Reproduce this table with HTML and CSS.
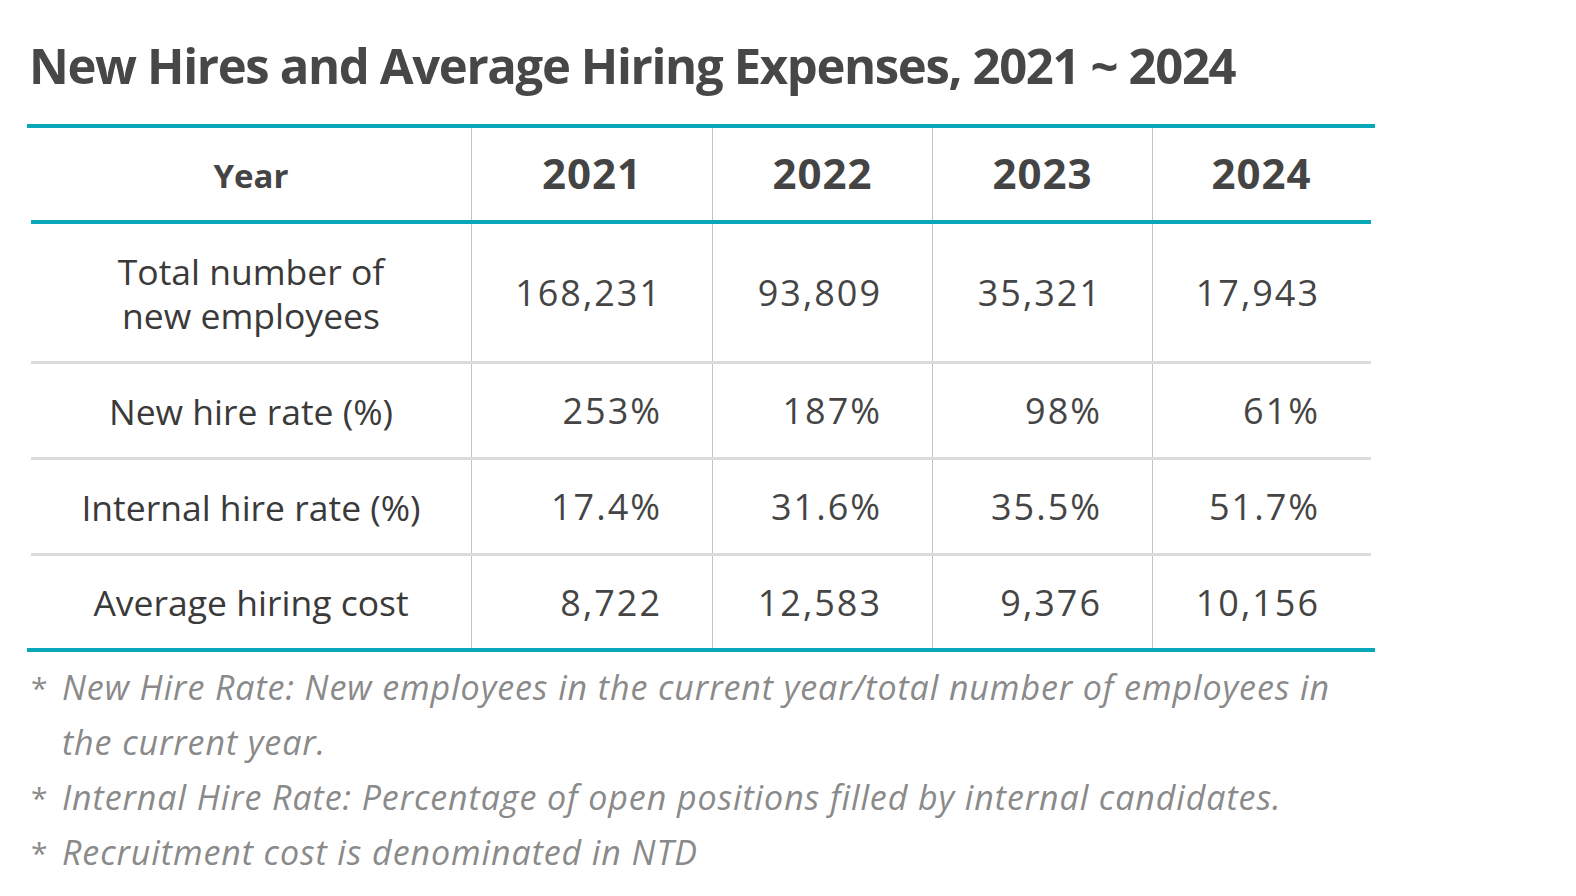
FILE: index.html
```html
<!DOCTYPE html>
<html lang="en">
<head>
<meta charset="utf-8">
<title>New Hires and Average Hiring Expenses</title>
<link rel="stylesheet" href="styles.css">
</head>
<body>
<div class="page">
  <h1 class="title">New Hires and Average Hiring Expenses, 2021 ~ 2024</h1>
  <div class="table">
    <div class="row head">
      <div class="cell label-cell"><span class="head-label">Year</span></div>
      <div class="cell year-cell">2021</div>
      <div class="cell year-cell">2022</div>
      <div class="cell year-cell">2023</div>
      <div class="cell year-cell">2024</div>
    </div>
    <div class="row r-tall">
      <div class="cell label-cell"><span class="label">Total number of<br>new employees</span></div>
      <div class="cell num">168,231</div>
      <div class="cell num">93,809</div>
      <div class="cell num">35,321</div>
      <div class="cell num">17,943</div>
    </div>
    <div class="row r-mid">
      <div class="cell label-cell"><span class="label">New hire rate (%)</span></div>
      <div class="cell num">253%</div>
      <div class="cell num">187%</div>
      <div class="cell num">98%</div>
      <div class="cell num">61%</div>
    </div>
    <div class="row r-mid">
      <div class="cell label-cell"><span class="label">Internal hire rate (%)</span></div>
      <div class="cell num">17.4%</div>
      <div class="cell num">31.6%</div>
      <div class="cell num">35.5%</div>
      <div class="cell num">51.7%</div>
    </div>
    <div class="row r-last">
      <div class="cell label-cell"><span class="label">Average hiring cost</span></div>
      <div class="cell num">8,722</div>
      <div class="cell num">12,583</div>
      <div class="cell num">9,376</div>
      <div class="cell num">10,156</div>
    </div>
  </div>
  <div class="notes">
    <div class="note"><span class="mark">*</span><span class="note-text">New Hire Rate: New employees in the current year/total number of employees in<br>the current year.</span></div>
    <div class="note"><span class="mark">*</span><span class="note-text">Internal Hire Rate: Percentage of open positions filled by internal candidates.</span></div>
    <div class="note"><span class="mark">*</span><span class="note-text">Recruitment cost is denominated in NTD</span></div>
  </div>
</div>
</body>
</html>
```
FILE: styles.css
```css
* { box-sizing: border-box; }
html, body {
  margin: 0;
  padding: 0;
  background: #ffffff;
}
body {
  font-family: "Open Sans", "Noto Sans", "Liberation Sans", sans-serif;
  color: #444444;
  width: 1576px;
  height: 896px;
  overflow: hidden;
}
.page {
  padding-top: 35px;
}
.title {
  margin: 0 0 29px 29px;
  font-family: "Open Sans", "Noto Sans", sans-serif;
  font-weight: 700;
  font-size: 49px;
  letter-spacing: -1.35px;
  line-height: 60px;
  height: 60px;
  color: #474747;
  white-space: nowrap;
}
.table {
  margin-left: 27px;
  width: 1348px;
  border-top: 4px solid #0aa6ba;
  border-bottom: 4px solid #0aa6ba;
}
.row {
  display: grid;
  grid-template-columns: 440px 241px 220px 220px 218px;
  margin: 0 4px;
}
.head {
  height: 96px;
  border-bottom: 4px solid #0aa6ba;
}
.r-tall {
  height: 140px;
  border-bottom: 3px solid #dcdcdc;
}
.r-mid {
  height: 96px;
  border-bottom: 3px solid #dcdcdc;
}
.r-last {
  height: 92px;
}
.cell {
  display: flex;
  align-items: center;
  border-left: 1px solid #c3c3c3;
}
.label-cell {
  border-left: none;
  justify-content: center;
  text-align: center;
}
.head-label {
  font-weight: 700;
  font-size: 33px;
  padding-top: 3px;
  color: #444444;
}
.year-cell {
  justify-content: center;
  font-weight: 700;
  font-size: 42px;
  letter-spacing: 1px;
  padding-bottom: 4px;
  color: #444444;
}
.label {
  font-size: 35.5px;
  font-weight: 500;
  line-height: 44px;
  color: #3a3a3a;
}
.num {
  justify-content: flex-end;
  padding-right: 50px;
  font-size: 36px;
  letter-spacing: 2px;
  color: #454545;
}
.notes {
  margin: 8px 0 0 31px;
  color: #8a8a8a;
  font-size: 34px;
  line-height: 55px;
}
.note {
  display: flex;
  align-items: flex-start;
  white-space: nowrap;
}
.mark {
  width: 31px;
  flex: none;
  font-size: 30px;
  font-style: normal;
}
.note-text {
  font-style: italic;
  letter-spacing: 0.9px;
}
```
